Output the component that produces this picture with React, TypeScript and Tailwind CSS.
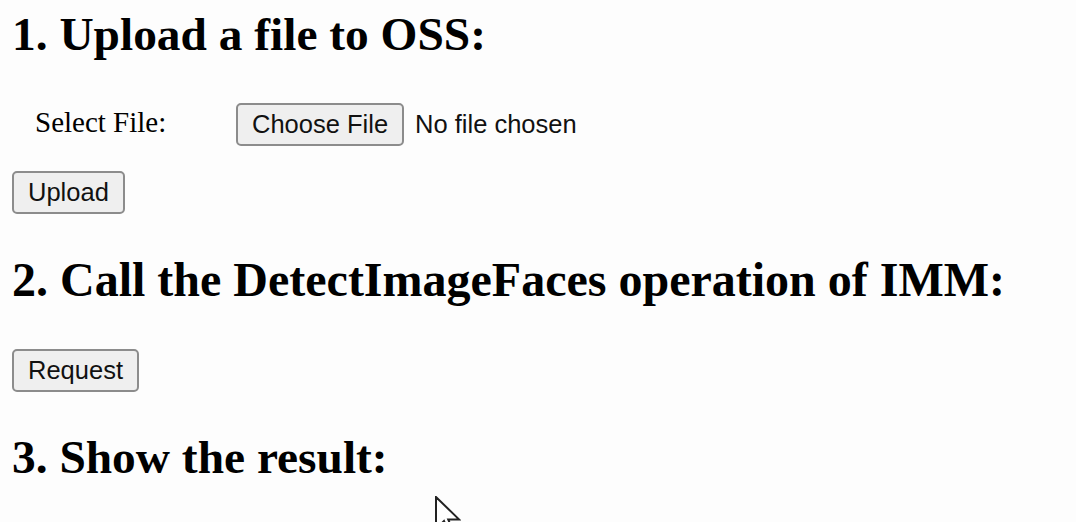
import React from 'react';

const serif = { fontFamily: '"Liberation Serif", "Times New Roman", serif' };
const sans = { fontFamily: '"Liberation Sans", Arial, sans-serif' };

function Heading({ children, className = 'text-[47.4px]' }: { children: React.ReactNode; className?: string }) {
  return (
    <h2 className={`leading-[48px] font-bold text-black whitespace-nowrap ${className}`} style={serif}>
      {children}
    </h2>
  );
}

function Btn({ label, className = '' }: { label: string; className?: string }) {
  return (
    <button
      className={`flex items-center h-[43px] px-[14px] border-2 border-[#8c8c8c] rounded-[5px] bg-[#efefef] text-[25.5px] leading-none text-[#111] ${className}`}
      style={sans}
    >
      {label}
    </button>
  );
}

export default function App() {
  return (
    <div className="relative w-[1076px] h-[522px] overflow-hidden bg-[#fdfdfd] pl-[12px] pt-[10px]">
      {/* 1. upload */}
      <Heading>1. Upload a file to OSS:</Heading>

      <div className="flex items-start mt-[45px] pl-[23px]">
        <span className="w-[201px] h-[42px] text-[29px] leading-[38px] text-black" style={serif}>
          Select File:
        </span>
        <Btn label="Choose File" className="h-[42px]" />
        <span className="ml-[11px] h-[42px] flex items-center pt-[1px] text-[25.5px] text-[#111]" style={sans}>
          No file chosen
        </span>
      </div>

      <Btn label="Upload" className="mt-[25px]" />

      {/* 2. request */}
      <Heading className="mt-[42px] text-[48px]">2. Call the DetectImageFaces operation of IMM:</Heading>

      <Btn label="Request" className="mt-[45px]" />

      {/* 3. result */}
      <Heading className="mt-[41px] text-[47.4px]">3. Show the result:</Heading>

      {/* mouse pointer left in the capture */}
      <svg className="absolute left-[435px] top-[496px]" width="26" height="40" viewBox="0 0 13 20">
        <path
          d="M0.5 0.5 L0.5 16.5 L4.5 12.5 L7.3 19 L9.3 18.1 L6.6 11.7 L12 11.7 Z"
          fill="#fff"
          stroke="#222"
          strokeWidth="1"
          strokeLinejoin="miter"
        />
      </svg>
    </div>
  );
}
